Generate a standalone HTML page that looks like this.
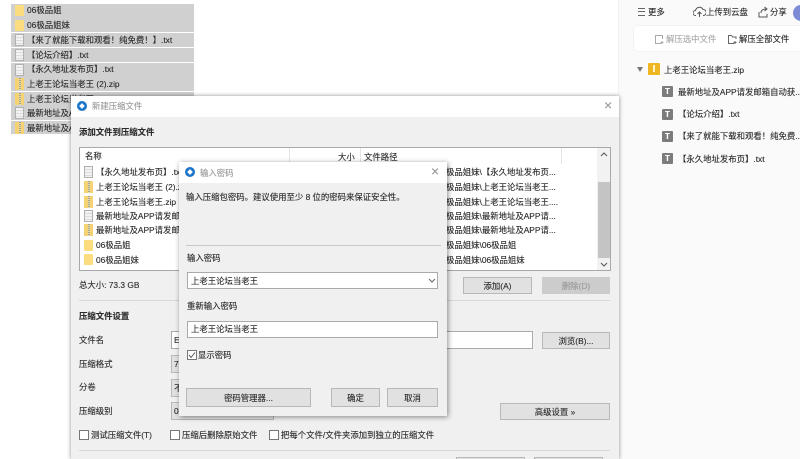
<!DOCTYPE html>
<html><head><meta charset="utf-8">
<style>
html,body{margin:0;padding:0;background:#fff}
#r{position:relative;width:800px;height:459px;overflow:hidden;background:#fff;font:8.4px/12px "Liberation Sans","Noto Sans CJK SC",sans-serif;color:#2a2a2a;filter:blur(.35px);-webkit-text-stroke:.12px currentColor}
#r div{position:absolute;white-space:nowrap;box-sizing:border-box}
.row{left:11px;width:183px;height:14px;background:#d0d0d0}
.t{line-height:12px}
.folder{width:9px;height:11px;background:#fbdc7e;border-radius:1px}
.doc{width:9px;height:12px;background:repeating-linear-gradient(180deg,#f2f2f2 0 2px,#dcdcdc 2px 3px);border:1px solid #b0b0b0}
.zip{width:9px;height:12px;background:#f5d272}
.zip::after{content:"";position:absolute;left:4px;top:0;width:2px;height:12px;background:repeating-linear-gradient(180deg,#a8a080 0 1px,#e4dcb8 1px 2px)}
.btn{background:#e1e1e1;border:1px solid #b8b8b8;text-align:center;color:#2a2a2a}
.inp{background:#fff;border:1px solid #8a8a8a;padding-left:3px;color:#2a2a2a}
.cb{width:10px;height:10px;border:1px solid #777;background:#fff}
.T{width:11px;height:11px;background:#7c7c7c;color:#fff;font-size:8px;line-height:11px;text-align:center;font-weight:bold;border-radius:1px}
</style></head><body><div id="r">

<div class="row" style="top:4px"></div><div class="folder" style="left:15px;top:5px"></div><div class="t" style="left:27px;top:4px">06极品姐</div>
<div class="row" style="top:18px"></div><div class="folder" style="left:15px;top:20px"></div><div class="t" style="left:27px;top:19px">06极品姐妹</div>
<div class="row" style="top:33px"></div><div class="doc" style="left:15px;top:34px"></div><div class="t" style="left:27px;top:34px">【来了就能下载和观看！纯免费！】.txt</div>
<div class="row" style="top:48px"></div><div class="doc" style="left:15px;top:49px"></div><div class="t" style="left:27px;top:49px">【论坛介绍】.txt</div>
<div class="row" style="top:63px"></div><div class="doc" style="left:15px;top:64px"></div><div class="t" style="left:27px;top:63px">【永久地址发布页】.txt</div>
<div class="row" style="top:77px"></div><div class="zip" style="left:15px;top:78px"></div><div class="t" style="left:27px;top:78px">上老王论坛当老王 (2).zip</div>
<div class="row" style="top:92px"></div><div class="zip" style="left:15px;top:93px"></div><div class="t" style="left:27px;top:93px">上老王论坛当老王.zip</div>
<div class="row" style="top:106px"></div><div class="doc" style="left:15px;top:107px"></div><div class="t" style="left:27px;top:107px">最新地址及APP请发邮箱</div>
<div class="row" style="top:121px;height:13px"></div><div class="zip" style="left:15px;top:122px"></div><div class="t" style="left:27px;top:122px">最新地址及APP请发邮箱</div>

<!-- right panel -->
<div style="left:618px;top:0;width:1px;height:459px;background:#f3f3f3"></div>
<div style="left:619px;top:0;width:181px;height:459px;background:#fafafa"></div>
<div style="left:638px;top:8px;width:7px;height:8px;border-top:1px solid #666;border-bottom:1px solid #666"></div>
<div style="left:638px;top:11px;width:7px;height:1px;background:#666"></div>
<div class="t" style="left:648px;top:6px">更多</div>
<svg style="position:absolute;left:693px;top:6px" width="13" height="12" viewBox="0 0 13 12" fill="none" stroke="#555"><path d="M3 9.5H2.5a2.5 2.5 0 0 1 0-5 4 4 0 0 1 7.5-1 3 3 0 0 1 .5 6H10M6.5 11V6M4.5 8l2-2 2 2"/></svg>
<div class="t" style="left:706px;top:6px">上传到云盘</div>
<svg style="position:absolute;left:758px;top:6px" width="11" height="12" viewBox="0 0 11 12" fill="none" stroke="#555"><path d="M1 6v5h8V8M3 7c0-3 2-4 5-4M6.5 1l2.5 2-2.500 2"/></svg>
<div class="t" style="left:770px;top:6px">分享</div>
<div style="left:793px;top:5px;width:16px;height:16px;border-radius:50%;background:#7d8ad6"></div>
<div style="left:633px;top:25px;width:175px;height:27px;background:#fff;border-radius:5px;border:1px solid #f3f3f3"></div>
<svg style="position:absolute;left:654px;top:34px" width="11" height="11" viewBox="0 0 11 11" fill="none" stroke="#aaa"><path d="M7 9.5H1.5v-8h7V5M8 7v3M6.500 8.500h3"/></svg>
<div class="t" style="left:666px;top:33px;color:#aaa">解压选中文件</div>
<svg style="position:absolute;left:727px;top:34px" width="11" height="11" viewBox="0 0 11 11" fill="none" stroke="#666"><path d="M7 9.500H1.500v-8h3l1 1.500h3.500V5M8 7v3M6.500 8.500h3"/></svg>
<div class="t" style="left:739px;top:33px">解压全部文件</div>
<div style="left:637px;top:67px;width:0;height:0;border-left:3px solid transparent;border-right:3px solid transparent;border-top:5px solid #777"></div>
<div style="left:648px;top:63px;width:12px;height:12px;background:#eeb620;border-radius:1px"></div>
<div style="left:653px;top:65px;width:2px;height:7px;background:#fff3c8"></div>
<div class="t" style="left:664px;top:64px">上老王论坛当老王.zip</div>
<div class="T" style="left:662px;top:86px">T</div><div class="t" style="left:678px;top:86px">最新地址及APP请发邮箱自动获...</div>
<div class="T" style="left:662px;top:109px">T</div><div class="t" style="left:678px;top:108px">【论坛介绍】.txt</div>
<div class="T" style="left:662px;top:131px">T</div><div class="t" style="left:678px;top:130px">【来了就能下载和观看！纯免费..</div>
<div class="T" style="left:662px;top:153px">T</div><div class="t" style="left:678px;top:153px">【永久地址发布页】.txt</div>

<!-- main dialog -->
<div style="left:71px;top:96px;width:548px;height:363px;background:#f0f0f0;box-shadow:0 0 4px rgba(0,0,0,.45)"></div>
<div style="left:71px;top:96px;width:548px;height:21px;background:#fff"></div>
<div style="left:77px;top:101px;width:10px;height:10px;border-radius:50%;background:#1a74c9"></div>
<div style="left:80px;top:104px;width:4px;height:4px;background:#fff;transform:rotate(45deg)"></div>
<div class="t" style="left:92px;top:100px;color:#999">新建压缩文件</div>
<div class="t" style="left:604px;top:99px;color:#999;font-size:14px">×</div>
<div class="t" style="left:79px;top:126px;font-weight:bold">添加文件到压缩文件</div>

<div style="left:79px;top:147px;width:532px;height:124px;background:#fff;border:1px solid #a8a8a8"></div>
<div style="left:289px;top:148px;width:1px;height:16px;background:#e5e5e5"></div>
<div style="left:360px;top:148px;width:1px;height:16px;background:#e5e5e5"></div>
<div style="left:561px;top:148px;width:1px;height:16px;background:#e5e5e5"></div>
<div class="t" style="left:85px;top:150px">名称</div>
<div class="t" style="left:338px;top:151px">大小</div>
<div class="t" style="left:364px;top:151px">文件路径</div>
<div style="left:597px;top:148px;width:13px;height:122px;background:#f2f2f2"></div>
<div style="left:598px;top:182px;width:12px;height:76px;background:#c4c4c4"></div>
<svg style="position:absolute;left:600px;top:151px" width="8" height="6"><path d="M1 5l3-3 3 3" fill="none" stroke="#555"/></svg>
<svg style="position:absolute;left:600px;top:262px" width="8" height="6"><path d="M1 1l3 3 3-3" fill="none" stroke="#555"/></svg>

<div class="doc" style="left:84px;top:166px"></div><div class="t" style="left:96px;top:166px">【永久地址发布页】.txt</div>
<div class="zip" style="left:84px;top:181px"></div><div class="t" style="left:96px;top:181px">上老王论坛当老王 (2).zip</div>
<div class="zip" style="left:84px;top:196px"></div><div class="t" style="left:96px;top:196px">上老王论坛当老王.zip</div>
<div class="doc" style="left:84px;top:210px"></div><div class="t" style="left:96px;top:210px">最新地址及APP请发邮箱</div>
<div class="zip" style="left:84px;top:224px"></div><div class="t" style="left:96px;top:224px">最新地址及APP请发邮箱</div>
<div class="folder" style="left:84px;top:240px"></div><div class="t" style="left:96px;top:239px">06极品姐</div>
<div class="folder" style="left:84px;top:254px"></div><div class="t" style="left:96px;top:254px">06极品姐妹</div>

<div class="t" style="left:446px;top:166px">极品姐妹\【永久地址发布页...</div>
<div class="t" style="left:446px;top:181px">极品姐妹\上老王论坛当老王...</div>
<div class="t" style="left:446px;top:196px">极品姐妹\上老王论坛当老王....</div>
<div class="t" style="left:446px;top:210px">极品姐妹\最新地址及APP请...</div>
<div class="t" style="left:446px;top:224px">极品姐妹\最新地址及APP请...</div>
<div class="t" style="left:446px;top:239px">极品姐妹\06极品姐</div>
<div class="t" style="left:446px;top:254px">极品姐妹\06极品姐妹</div>

<div class="t" style="left:79px;top:279px">总大小: 73.3 GB</div>
<div class="btn" style="left:463px;top:277px;width:69px;height:17px;line-height:16px">添加(A)</div>
<div class="btn" style="left:542px;top:277px;width:68px;height:17px;line-height:16px;background:#ccc;border-color:#ccc;color:#999">删除(D)</div>
<div style="left:79px;top:300px;width:531px;height:1px;background:#d8d8d8"></div>

<div class="t" style="left:79px;top:310px;font-weight:bold">压缩文件设置</div>
<div class="t" style="left:79px;top:334px">文件名</div>
<div class="t" style="left:79px;top:358px">压缩格式</div>
<div class="t" style="left:79px;top:381px">分卷</div>
<div class="t" style="left:79px;top:405px">压缩级别</div>
<div class="inp" style="left:171px;top:331px;width:362px;height:18px;line-height:16px;padding-left:2px;border-color:#aaa">E</div>
<div class="btn" style="left:171px;top:355px;width:40px;height:18px;line-height:16px;text-align:left;padding-left:2px">7</div>
<div class="btn" style="left:171px;top:379px;width:40px;height:18px;line-height:16px;text-align:left;padding-left:2px">不</div>
<div class="btn" style="left:171px;top:402px;width:103px;height:18px;line-height:16px;text-align:left;padding-left:2px">0</div>
<div class="btn" style="left:542px;top:332px;width:68px;height:17px;line-height:16px">浏览(B)...</div>
<div class="btn" style="left:500px;top:403px;width:110px;height:17px;line-height:16px">高级设置 »</div>

<div class="cb" style="left:79px;top:430px"></div><div class="t" style="left:91px;top:429px">测试压缩文件(T)</div>
<div class="cb" style="left:170px;top:430px"></div><div class="t" style="left:182px;top:429px">压缩后删除原始文件</div>
<div class="cb" style="left:269px;top:430px"></div><div class="t" style="left:281px;top:429px">把每个文件/文件夹添加到独立的压缩文件</div>
<div style="left:79px;top:450px;width:531px;height:1px;background:#d8d8d8"></div>
<div class="btn" style="left:456px;top:457px;width:69px;height:10px"></div>
<div class="btn" style="left:534px;top:457px;width:69px;height:10px"></div>

<!-- password dialog -->
<div style="left:179px;top:162px;width:268px;height:254px;background:#f0f0f0;box-shadow:1px 1px 5px rgba(0,0,0,.45)"></div>
<div style="left:179px;top:162px;width:268px;height:21px;background:#fff"></div>
<div style="left:185px;top:167px;width:10px;height:10px;border-radius:50%;background:#1a74c9"></div>
<div style="left:188px;top:170px;width:4px;height:4px;background:#fff;transform:rotate(45deg)"></div>
<div class="t" style="left:200px;top:167px;color:#999">输入密码</div>
<div class="t" style="left:431px;top:165px;color:#999;font-size:14px">×</div>
<div class="t" style="left:186px;top:191px">输入压缩包密码。建议使用至少 8 位的密码来保证安全性。</div>
<div style="left:186px;top:245px;width:255px;height:1px;background:#c8c8c8"></div>
<div class="t" style="left:187px;top:252px">输入密码</div>
<div class="inp" style="left:187px;top:272px;width:251px;height:17px;line-height:16px;border-color:#aaa">上老王论坛当老王</div>
<svg style="position:absolute;left:428px;top:278px" width="8" height="6"><path d="M1 1l3 3 3-3" fill="none" stroke="#666"/></svg>
<div class="t" style="left:187px;top:300px">重新输入密码</div>
<div class="inp" style="left:187px;top:321px;width:251px;height:17px;line-height:15px;border-color:#aaa">上老王论坛当老王</div>
<div class="cb" style="left:187px;top:350px"></div>
<svg style="position:absolute;left:188px;top:351px" width="8" height="8"><path d="M1 4l2 2.500 4-5" fill="none" stroke="#555"/></svg>
<div class="t" style="left:198px;top:349px">显示密码</div>
<div class="btn" style="left:186px;top:388px;width:125px;height:19px;line-height:18px">密码管理器...</div>
<div class="btn" style="left:331px;top:388px;width:49px;height:19px;line-height:18px">确定</div>
<div class="btn" style="left:387px;top:388px;width:51px;height:19px;line-height:18px">取消</div>

</div></body></html>
